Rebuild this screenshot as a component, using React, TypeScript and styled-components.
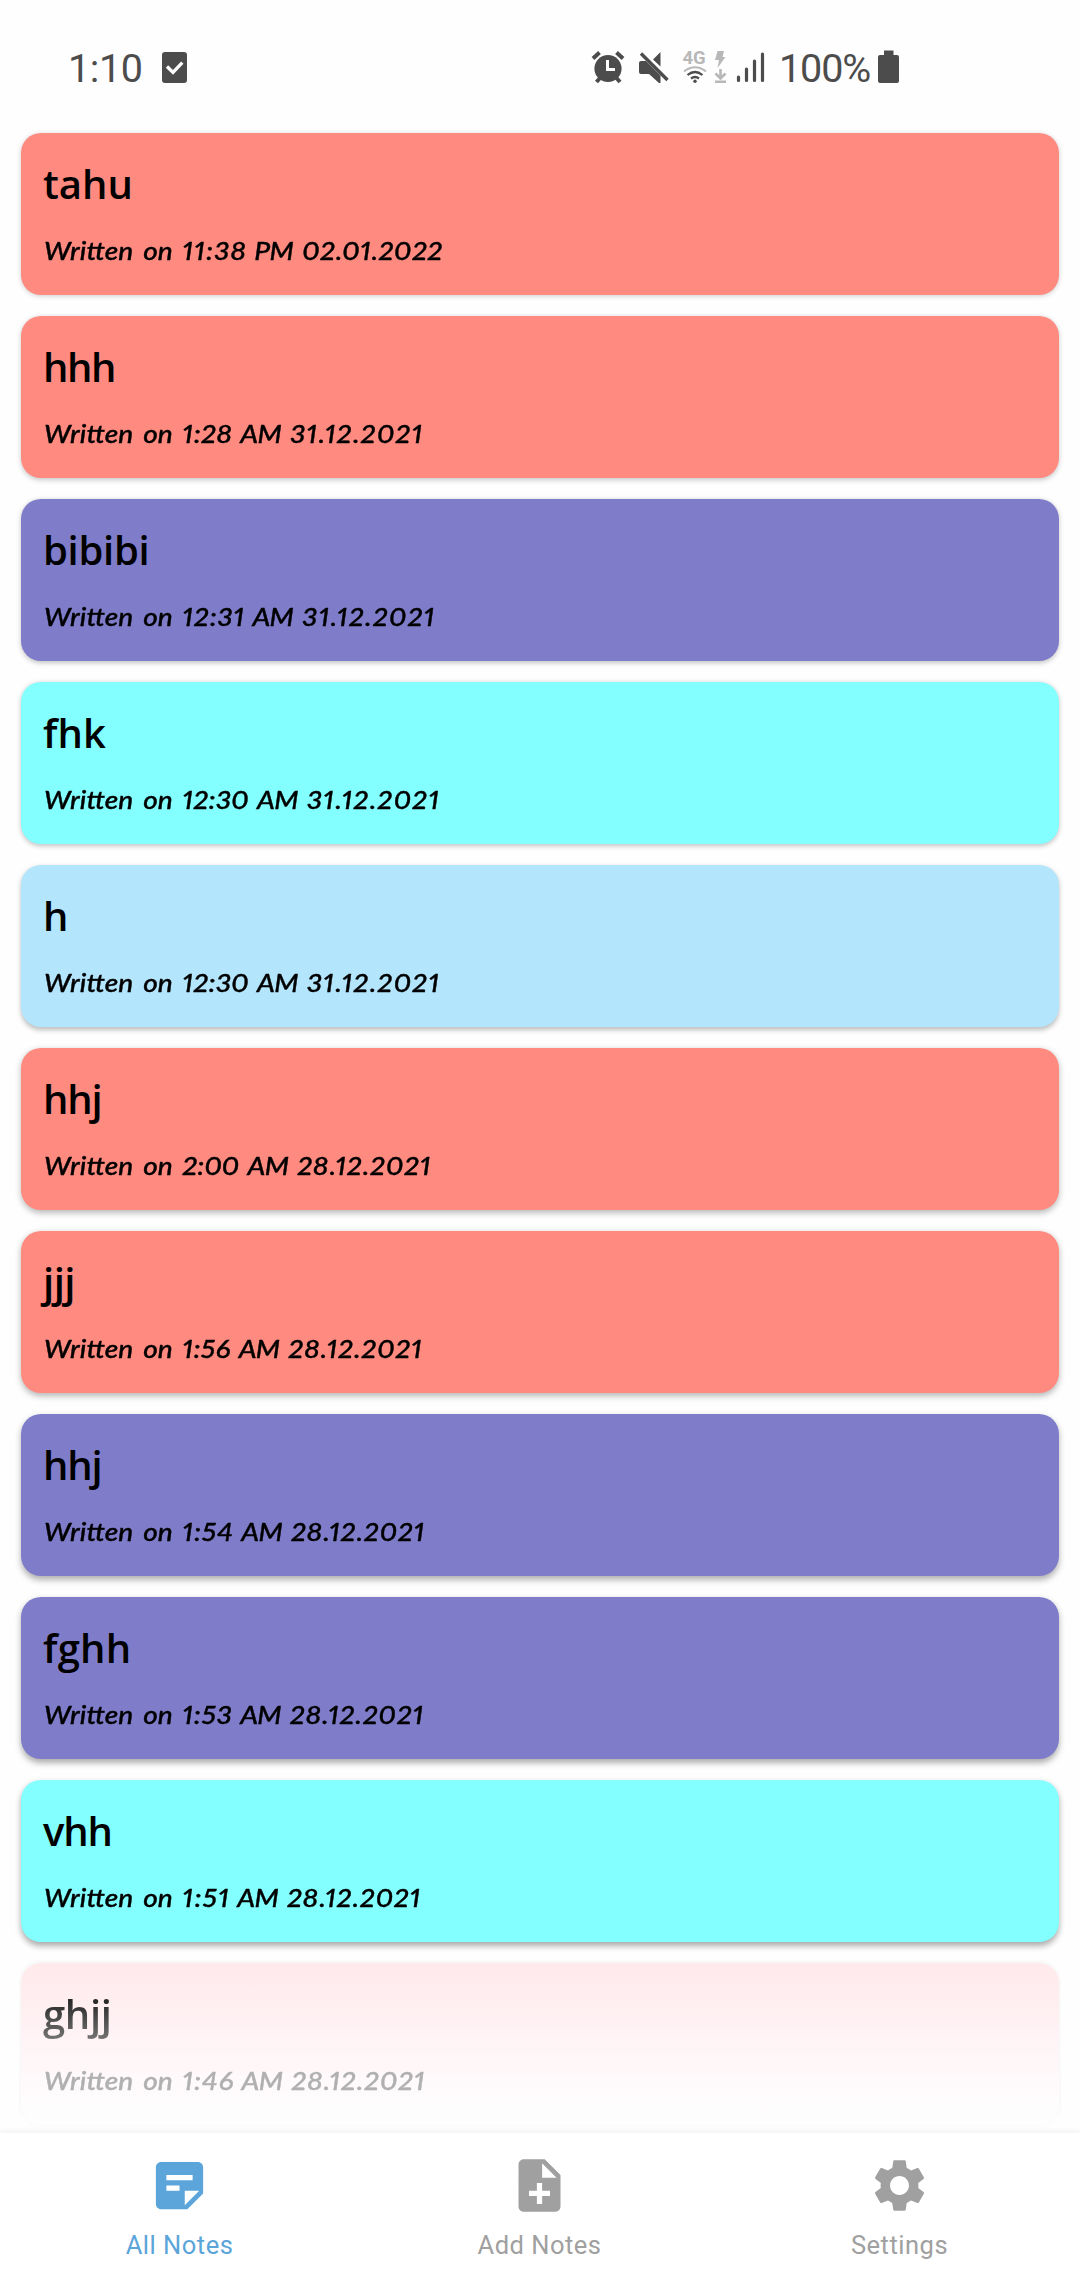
import React from "react";
import styled, { createGlobalStyle } from "styled-components";

const GlobalStyle = createGlobalStyle`
  * { box-sizing: border-box; }
  body { margin: 0; background: #fefefe; font-family: Roboto, sans-serif; }
  svg { display: block; flex: none; }
`;

const Screen = styled.div`
  width: 1080px;
  height: 2280px;
  display: flex;
  flex-direction: column;
  overflow: hidden;
  background: #fefefe;
`;

const StatusBar = styled.header`
  flex: none;
  height: 133px;
  padding: 0 180px 0 68px;
  display: flex;
  align-items: flex-start;
  justify-content: space-between;
  color: #4c4c4c;
  font-size: 39.5px;
  line-height: 40px;
`;

const StatusLeft = styled.div`
  display: flex;
  gap: 20px;
  padding-top: 48px;
`;

const StatusRight = styled.div`
  display: flex;
`;

const Clock = styled.span`
  width: 74px;
  padding-top: 1px;
  font-weight: 400;
  letter-spacing: -0.4px;
  white-space: nowrap;
`;

const Percent = styled.span`
  width: 98px;
  padding-top: 49px;
  font-weight: 400;
  letter-spacing: -1.1px;
  white-space: nowrap;
`;

const NetworkLabel = styled.text`
  font: 700 18.5px Roboto, sans-serif;
  fill: #b8b8b8;
`;

const NoteList = styled.main`
  flex: 1;
  min-height: 0;
  padding: 0 21px;
  display: flex;
  flex-direction: column;
  gap: 21px;
`;

const Card = styled.article<{ $color: string; $depth: number }>`
  flex: none;
  height: 162px;
  padding: 23px 22px 0;
  border-radius: 20px;
  background: ${(p) => p.$color};
  box-shadow: 0 ${(p) => 1 + p.$depth * 0.3}px ${(p) => 5 + p.$depth * 0.2}px
    rgba(0, 0, 0, ${(p) => 0.2 + p.$depth * 0.015});
`;

const Title = styled.h2<{ $spacing: number }>`
  margin: 0;
  height: 61px;
  color: #000;
  font: 600 40px/56px "Open Sans", sans-serif;
  letter-spacing: ${(p) => p.$spacing}px;
  white-space: nowrap;
`;

const Stamp = styled.p`
  margin: 0;
  padding-left: 1px;
  display: flex;
  gap: 9px;
  color: #000;
  font: italic 500 25.5px/66px Lato, sans-serif;
  font-feature-settings: "liga" 1, "pnum" 1;
  -webkit-text-stroke: 0.4px currentColor;
  white-space: nowrap;
  transform: scaleX(1.1);
  transform-origin: left center;
`;

const Word = styled.span<{ $spacing?: number; $tuck?: number }>`
  letter-spacing: ${(p) => p.$spacing ?? 0}px;
  margin-right: ${(p) => -(p.$spacing ?? 0) - (p.$tuck ?? 0)}px;
`;

const FadeCard = styled(Card)`
  background: linear-gradient(#ffe9eb 0%, #fff3f5 45%, #fefcfd 85%, #fefefe 100%);
  box-shadow: 0 -1px 4px rgba(0, 0, 0, 0.06);
  ${Title} {
    color: transparent;
    background: linear-gradient(#1c1c1c 8px, #7c7c7c 58px);
    background-clip: text;
  }
  ${Stamp} {
    color: #b0b0b0;
  }
`;

const NavBar = styled.nav`
  flex: none;
  height: 147px;
  display: grid;
  grid-template-columns: repeat(3, 1fr);
  background: #fff;
  box-shadow: 0 -2px 6px rgba(0, 0, 0, 0.05);
`;

const NavItem = styled.div<{ $active?: boolean }>`
  display: flex;
  flex-direction: column;
  align-items: center;
  padding: 21px 1px 0 0;
  gap: 5px;
  color: ${(p) => (p.$active ? "#5ba5da" : "#a0a0a0")};
`;

const NavLabel = styled.span`
  font-size: 25.5px;
  line-height: 46px;
  letter-spacing: 0.5px;
`;

type Note = {
  title: string;
  titleSpacing: number;
  color: string;
  time: string;
  timeSpacing: number;
  half: string;
  date: string;
};

const CORAL = "#ff8a80";
const PURPLE = "#7f7dca";
const AQUA = "#84ffff";
const SKY = "#b3e5fc";

const dateSpacing: Record<string, number> = {
  "02.01.2022": 0.6,
  "31.12.2021": 1.2,
  "28.12.2021": 0.85,
};

const notes: Note[] = [
  { title: "tahu", titleSpacing: 0, color: CORAL, time: "11:38", timeSpacing: 1.1, half: "PM", date: "02.01.2022" },
  { title: "hhh", titleSpacing: -1.4, color: CORAL, time: "1:28", timeSpacing: 0.5, half: "AM", date: "31.12.2021" },
  { title: "bibibi", titleSpacing: -0.3, color: PURPLE, time: "12:31", timeSpacing: 0.8, half: "AM", date: "31.12.2021" },
  { title: "fhk", titleSpacing: 0, color: AQUA, time: "12:30", timeSpacing: 0.3, half: "AM", date: "31.12.2021" },
  { title: "h", titleSpacing: 0, color: SKY, time: "12:30", timeSpacing: 0.3, half: "AM", date: "31.12.2021" },
  { title: "hhj", titleSpacing: -1.1, color: CORAL, time: "2:00", timeSpacing: 0, half: "AM", date: "28.12.2021" },
  { title: "jjj", titleSpacing: -0.5, color: CORAL, time: "1:56", timeSpacing: 0.4, half: "AM", date: "28.12.2021" },
  { title: "hhj", titleSpacing: -1.1, color: PURPLE, time: "1:54", timeSpacing: 0.9, half: "AM", date: "28.12.2021" },
  { title: "fghh", titleSpacing: 0.2, color: PURPLE, time: "1:53", timeSpacing: 0.7, half: "AM", date: "28.12.2021" },
  { title: "vhh", titleSpacing: -1.1, color: AQUA, time: "1:51", timeSpacing: 1.2, half: "AM", date: "28.12.2021" },
  { title: "ghjj", titleSpacing: -0.3, color: "#ffebee", time: "1:46", timeSpacing: 0.9, half: "AM", date: "28.12.2021" },
];

function NoteCard({ note, index, faded }: { note: Note; index: number; faded: boolean }) {
  const Shell = faded ? FadeCard : Card;
  return (
    <Shell $color={note.color} $depth={index}>
      <Title $spacing={note.titleSpacing}>{note.title}</Title>
      <Stamp>
        <Word $spacing={0.1}>Written</Word>
        <Word>on</Word>
        <Word $spacing={note.timeSpacing} $tuck={1.4}>{note.time}</Word>
        <Word $spacing={-0.6} $tuck={1.4}>{note.half}</Word>
        <Word $spacing={dateSpacing[note.date]}>{note.date}</Word>
      </Stamp>
    </Shell>
  );
}

function TaskIcon() {
  return (
    <svg width="26" height="40" viewBox="162 48 26 40">
      <rect x="162" y="52" width="25" height="31" rx="3" fill="#4c4c4c" />
      <path d="M167 66.500l6 6 9.300-9.800" fill="none" stroke="#fefefe" strokeWidth="3.300" />
    </svg>
  );
}

function StatusIcons() {
  return (
    <svg width="190" height="90" viewBox="589 0 190 90" fill="#4c4c4c">
      <circle cx="608" cy="68.500" r="13.600" />
      <path d="M593 58.500l6.500-6M623 58.500l-6.500-6" stroke="#4c4c4c" strokeWidth="4" />
      <path d="M600 78l-3.500 4M616.500 78l3.500 4" stroke="#4c4c4c" strokeWidth="4" />
      <path d="M607.500 60v9.500h7.500" fill="none" stroke="#fefefe" strokeWidth="3" />
      <path d="M641 61h5l14.500 14.500V83h-1.500l-10-9h-8q-2 0-2-2v-9q0-2 2-2zM653 59.500l7.500-7.500v14.500z" />
      <path d="M641 53.500L667.500 80" stroke="#4c4c4c" strokeWidth="3.300" />
      <NetworkLabel x="682.500" y="64.300">4G</NetworkLabel>
      <g fill="none" strokeWidth="2">
        <path d="M684 71.500q11-8.500 22 0" stroke="#b8b8b8" />
        <path d="M687.500 75q7.500-6 15 0M691 78.500q4-3 8 0" stroke="#4c4c4c" strokeWidth="2.200" />
      </g>
      <circle cx="695" cy="81.200" r="1.700" />
      <path d="M717.500 51h6.500l-1.500 6h3l-8 11 1.500-8h-4z" fill="#b8b8b8" />
      <path d="M720.500 69v9.500M715.500 73.500l5 5 5-5M715 81.800h11" fill="none" stroke="#b8b8b8" strokeWidth="2.600" />
      <path
        d="M738.500 77v3.500M746.500 69v11.500M754.500 61v19.500M762.500 54v26.500"
        stroke="#4c4c4c"
        strokeWidth="3.200"
        strokeLinecap="round"
      />
    </svg>
  );
}

function BatteryIcon() {
  return (
    <svg width="23" height="90" viewBox="877 0 23 90" fill="#4c4c4c">
      <path d="M884 50.500h9.500v4.500h3.500q2 0 2 2v24q0 2-2 2h-17q-2 0-2-2v-24q0-2 2-2h4z" />
    </svg>
  );
}

const ICONS = {
  notes:
    "M19 3H4.990C3.890 3 3 3.900 3 5v14c0 1.100.89 2 1.990 2H15l6-6V5c0-1.100-.9-2-2-2zM7 8h10v2H7V8zm5 6H7v-2h5v2zm2 5.500V14h5.500L14 19.500z",
  add: "M14 2H6c-1.100 0-1.990.9-1.990 2L4 20c0 1.100.89 2 1.990 2H18c1.100 0 2-.9 2-2V8l-6-6zm2 14h-3v3h-2v-3H8v-2h3v-3h2v3h3v2zm-3-7V3.500L18.500 9H13z",
  settings:
    "M19.140 12.940c.04-.3.060-.61.060-.94 0-.32-.02-.64-.07-.94l2.030-1.580c.18-.14.230-.41.120-.61l-1.920-3.320c-.12-.22-.37-.29-.59-.22l-2.390.96c-.5-.38-1.030-.7-1.620-.94l-.36-2.540c-.04-.24-.24-.41-.48-.41h-3.840c-.24 0-.43.170-.47.410l-.36 2.540c-.59.240-1.130.570-1.620.940l-2.390-.96c-.22-.08-.47 0-.59.220L2.740 8.870c-.12.210-.08.470.120.610l2.030 1.580c-.05.3-.09.630-.09.940s.02.640.07.940l-2.030 1.580c-.18.140-.23.410-.12.610l1.920 3.320c.12.220.37.290.59.220l2.390-.96c.5.380 1.030.7 1.620.94l.36 2.540c.05.240.24.410.48.410h3.840c.24 0 .44-.17.470-.41l.36-2.540c.59-.24 1.130-.56 1.620-.94l2.390.96c.22.080.47 0 .59-.22l1.920-3.320c.12-.22.070-.47-.12-.61l-2.010-1.580zM12 15.600c-1.980 0-3.600-1.620-3.600-3.600s1.620-3.600 3.600-3.600 3.600 1.620 3.600 3.600-1.620 3.600-3.600 3.600z",
};

function NavIcon({ d }: { d: string }) {
  return (
    <svg width="63" height="63" viewBox="0 0 24 24" fill="currentColor">
      <path d={d} />
    </svg>
  );
}

export default function App() {
  return (
    <Screen>
      <GlobalStyle />
      <StatusBar>
        <StatusLeft>
          <Clock>1:10</Clock>
          <TaskIcon />
        </StatusLeft>
        <StatusRight>
          <StatusIcons />
          <Percent>100%</Percent>
          <BatteryIcon />
        </StatusRight>
      </StatusBar>
      <NoteList>
        {notes.map((note, i) => (
          <NoteCard key={i} note={note} index={i} faded={i === notes.length - 1} />
        ))}
      </NoteList>
      <NavBar>
        <NavItem $active>
          <NavIcon d={ICONS.notes} />
          <NavLabel>All Notes</NavLabel>
        </NavItem>
        <NavItem>
          <NavIcon d={ICONS.add} />
          <NavLabel>Add Notes</NavLabel>
        </NavItem>
        <NavItem>
          <NavIcon d={ICONS.settings} />
          <NavLabel>Settings</NavLabel>
        </NavItem>
      </NavBar>
    </Screen>
  );
}
